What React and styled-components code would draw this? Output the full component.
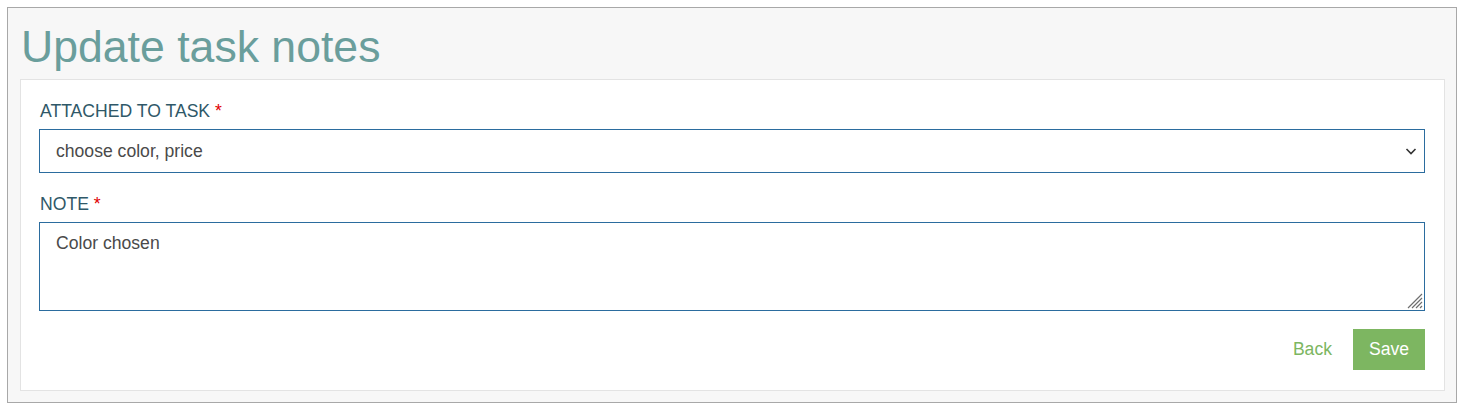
import React from 'react';
import styled, { createGlobalStyle } from 'styled-components';

const GlobalStyle = createGlobalStyle`
  body {
    margin: 0;
    padding: 7px 9px 7px 7px;
    background: #ffffff;
    font-family: "Liberation Sans", Arial, sans-serif;
  }
`;

const PageFrame = styled.div`
  background: #f7f7f7;
  border: 1px solid #a8a8a8;
  padding: 0 11px 11px 12px;
`;

const Title = styled.h1`
  margin: 0;
  padding: 14px 0 0 1px;
  height: 57px;
  font-size: 44.6px;
  font-weight: 400;
  line-height: 50px;
  color: #6a9e9c;
`;

const Panel = styled.div`
  background: #ffffff;
  border: 1px solid #e3e3e3;
  padding: 21px 19px 20px 18px;
`;

const Field = styled.div`
  display: flex;
  flex-direction: column;
  margin-bottom: ${(p) => p.$gap || 0}px;
`;

const Label = styled.label`
  font-size: 17.6px;
  line-height: 20px;
  color: #2f5868;
  margin: 0 0 8px 1px;

  span {
    color: #e00000;
  }
`;

const SelectBox = styled.div`
  position: relative;
  height: 44px;
  box-sizing: border-box;
  border: 1px solid #2b6c9e;
  display: flex;
  align-items: center;
  padding: 0 16px;
  font-size: 17.6px;
  color: #4a4a4a;
`;

const Chevron = styled.svg`
  position: absolute;
  right: 6px;
  top: 50%;
  transform: translateY(-50%);
`;

const NoteArea = styled.div`
  position: relative;
  height: 89px;
  box-sizing: border-box;
  border: 1px solid #2b6c9e;
  padding: 10px 16px;
  font-size: 17.6px;
  line-height: 20px;
  color: #4a4a4a;
`;

const Grip = styled.svg`
  position: absolute;
  right: 1px;
  bottom: 1px;
`;

const Actions = styled.div`
  display: flex;
  justify-content: flex-end;
  align-items: center;
  gap: 21px;
  margin-top: 18px;
`;

const LinkButton = styled.a`
  font-size: 17.6px;
  color: #7cb661;
  text-decoration: none;
`;

const PrimaryButton = styled.button`
  all: unset;
  width: 72px;
  height: 41px;
  background: #7db661;
  color: #ffffff;
  font-size: 17.6px;
  text-align: center;
  line-height: 41px;
`;

export default function App() {
  return (
    <>
      <GlobalStyle />
      <PageFrame>
        <Title>Update task notes</Title>
        <Panel>
          <Field $gap={21}>
            <Label>
              ATTACHED TO TASK <span>*</span>
            </Label>
            <SelectBox>
              choose color, price
              <Chevron width="14" height="14" viewBox="0 0 14 14">
                <path d="M2.5 5 L7 9.5 L11.5 5" fill="none" stroke="#333" strokeWidth="1.6" />
              </Chevron>
            </SelectBox>
          </Field>
          <Field>
            <Label>
              NOTE <span>*</span>
            </Label>
            <NoteArea>
              Color chosen
              <Grip width="16" height="16" viewBox="0 0 16 16">
                <path
                  d="M15 1 L1 15 M15 5 L5 15 M15 9 L9 15 M15 13 L13 15"
                  stroke="#6f6f6f"
                  strokeWidth="1.2"
                />
              </Grip>
            </NoteArea>
          </Field>
          <Actions>
            <LinkButton href="#">Back</LinkButton>
            <PrimaryButton>Save</PrimaryButton>
          </Actions>
        </Panel>
      </PageFrame>
    </>
  );
}
